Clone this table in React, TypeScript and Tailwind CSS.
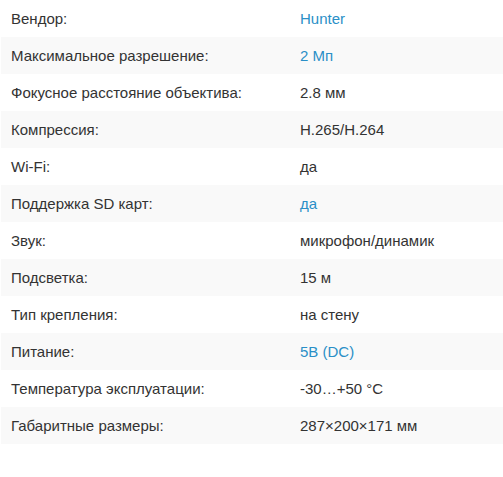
import React from 'react';

type Row = { label: string; value: string; link?: boolean };

const rows: Row[] = [
  { label: 'Вендор:', value: 'Hunter', link: true },
  { label: 'Максимальное разрешение:', value: '2 Мп', link: true },
  { label: 'Фокусное расстояние объектива:', value: '2.8 мм' },
  { label: 'Компрессия:', value: 'H.265/H.264' },
  { label: 'Wi-Fi:', value: 'да' },
  { label: 'Поддержка SD карт:', value: 'да', link: true },
  { label: 'Звук:', value: 'микрофон/динамик' },
  { label: 'Подсветка:', value: '15 м' },
  { label: 'Тип крепления:', value: 'на стену' },
  { label: 'Питание:', value: '5В (DC)', link: true },
  { label: 'Температура эксплуатации:', value: '-30…+50 °C' },
  { label: 'Габаритные размеры:', value: '287×200×171 мм' },
];

export default function App() {
  return (
    <div
      className="w-[503px] h-[477px] bg-white text-[15px] text-[#333]"
      style={{ fontFamily: '"Liberation Sans", Arial, sans-serif' }}
    >
      <div className="ml-px flex flex-col">
        {rows.map((r, i) => (
          <div
            key={r.label}
            className={`flex h-[37px] items-center pt-[2px] ${i % 2 === 1 ? 'bg-[#f9f9f9]' : 'bg-white'}`}
          >
            <div className="w-[299px] pl-[10px]">{r.label}</div>
            <div className={r.link ? 'text-[#2a8fc7]' : ''}>{r.value}</div>
          </div>
        ))}
      </div>
    </div>
  );
}
